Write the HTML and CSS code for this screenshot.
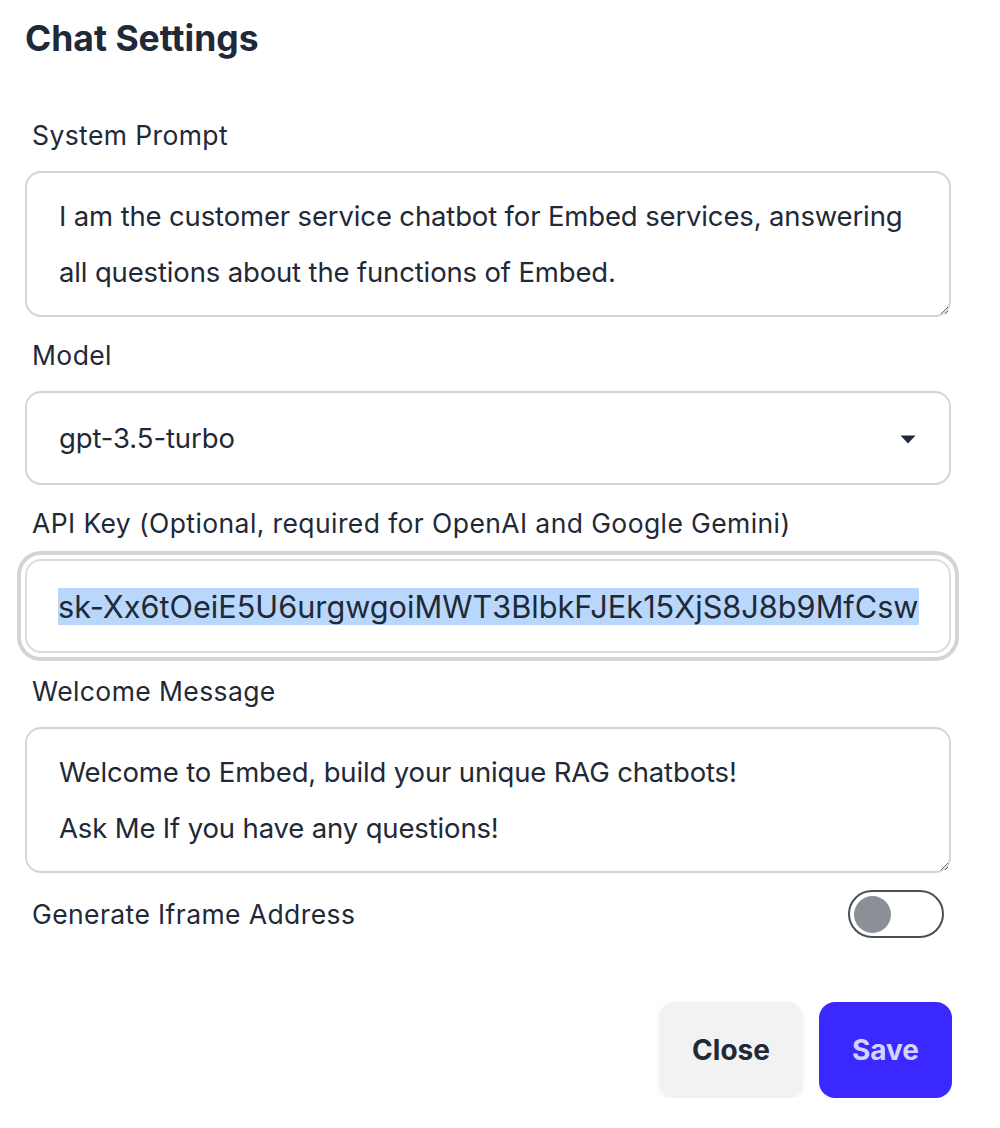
FILE: index.html
```html
<!DOCTYPE html>
<html lang="en">
<head>
<meta charset="utf-8">
<title>Chat Settings</title>
<link rel="stylesheet" href="styles.css">
</head>
<body>
<div class="modal">
  <h1 class="title">Chat Settings</h1>

  <div class="field first">
    <label class="label">System Prompt</label>
    <textarea class="textarea">I am the customer service chatbot for Embed services, answering all questions about the functions of Embed.</textarea>
  </div>

  <div class="field">
    <label class="label">Model</label>
    <div class="select">
      <span>gpt-3.5-turbo</span>
      <svg class="caret" width="16" height="9" viewBox="0 0 16 9"><path d="M0.5 0.5 L15.5 0.5 L8 8.5 Z" fill="#1f2937"/></svg>
    </div>
  </div>

  <div class="field">
    <label class="label">API Key (Optional, required for OpenAI and Google Gemini)</label>
    <div class="input focused"><span class="sel">sk-Xx6tOeiE5U6urgwgoiMWT3BlbkFJEk15XjS8J8b9MfCsw</span></div>
  </div>

  <div class="field">
    <label class="label">Welcome Message</label>
    <textarea class="textarea">Welcome to Embed, build your unique RAG chatbots!
Ask Me If you have any questions!</textarea>
  </div>

  <div class="toggle-row">
    <span class="label">Generate Iframe Address</span>
    <span class="toggle"><span class="knob"></span></span>
  </div>

  <div class="actions">
    <button class="btn btn-close">Close</button>
    <button class="btn btn-save">Save</button>
  </div>
</div>
</body>
</html>
```

FILE: styles.css
```css
* { box-sizing: border-box; }

html, body {
  margin: 0;
  padding: 0;
  background: #ffffff;
}

body {
  font-family: Inter, "Noto Sans", sans-serif;
  color: #1f2937;
}

.modal {
  width: 1000px;
  padding: 0 49px 0 25px;
}

.title {
  margin: 19px 0 0 0;
  font-size: 35.5px;
  line-height: 40px;
  font-weight: 700;
  color: #1f2937;
}

.field {
  display: flex;
  flex-direction: column;
  margin-top: 22px;
}

.field.first {
  margin-top: 60px;
}

.label {
  display: block;
  font-size: 26.5px;
  letter-spacing: 0.4px;
  line-height: 32px;
  padding-left: 7px;
  margin-bottom: 20px;
  color: #1f2937;
}

.textarea {
  display: block;
  width: 926px;
  height: 146px;
  margin: 0;
  padding: 15px 32px;
  border: 2px solid #d4d4d8;
  border-radius: 16px;
  font-family: Inter, "Noto Sans", sans-serif;
  font-size: 27.5px;
  letter-spacing: -0.15px;
  line-height: 56px;
  color: #1f2937;
  background: #ffffff;
  overflow: hidden;
  resize: vertical;
  outline: none;
}

.select {
  display: flex;
  align-items: center;
  justify-content: space-between;
  height: 94px;
  padding: 0 33px 0 32px;
  border: 2px solid #d4d4d8;
  border-radius: 16px;
  font-size: 27.5px;
  letter-spacing: -0.1px;
  color: #1f2937;
}

.caret {
  display: block;
  margin-top: 2px;
}

.input {
  display: flex;
  align-items: center;
  height: 94px;
  padding: 0 32px 0 31px;
  border: 2px solid #dcdce0;
  border-radius: 16px;
  font-size: 30.7px;
  color: #1f2937;
  overflow: hidden;
  white-space: nowrap;
}

.input.focused {
  outline: 4px solid #d4d4d8;
  outline-offset: 4px;
}

.sel {
  display: inline-block;
  height: 37px;
  line-height: 37px;
  background: #b8d7fb;
  padding-right: 1px;
}

.toggle-row {
  display: flex;
  align-items: center;
  justify-content: space-between;
  margin-top: 17px;
  padding-right: 7px;
}

.toggle-row .label {
  margin-bottom: 0;
}

.toggle {
  display: flex;
  align-items: center;
  width: 96px;
  height: 48px;
  border: 2px solid #4b5058;
  border-radius: 24px;
  padding-left: 4px;
}

.knob {
  display: block;
  width: 37px;
  height: 37px;
  border-radius: 50%;
  background: #8b9097;
}

.actions {
  display: flex;
  justify-content: flex-end;
  gap: 16px;
  margin-top: 64px;
  margin-right: -1px;
}

.btn {
  height: 96px;
  border: none;
  border-radius: 16px;
  font-family: Inter, "Noto Sans", sans-serif;
  font-size: 28px;
  font-weight: 700;
  cursor: pointer;
}

.btn-close {
  width: 144px;
  background: #f2f2f2;
  color: #1f2937;
  box-shadow: 0 2px 6px rgba(0, 0, 0, 0.06);
}

.btn-save {
  width: 133px;
  background: #3b28ff;
  color: #d2d4ff;
}
```
